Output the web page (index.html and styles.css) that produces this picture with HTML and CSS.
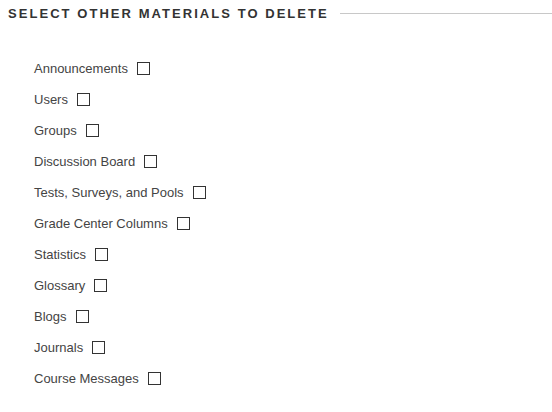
FILE: index.html
```html
<!DOCTYPE html>
<html>
<head>
<meta charset="utf-8">
<link rel="stylesheet" href="styles.css">
</head>
<body>
<div class="section">
  <div class="heading">
    <h2 class="title">SELECT OTHER MATERIALS TO DELETE</h2>
    <div class="rule"></div>
  </div>
  <ul class="list">
    <li class="row"><label class="label">Announcements</label><span class="box"></span></li>
    <li class="row"><label class="label">Users</label><span class="box"></span></li>
    <li class="row"><label class="label">Groups</label><span class="box"></span></li>
    <li class="row"><label class="label">Discussion Board</label><span class="box"></span></li>
    <li class="row"><label class="label">Tests, Surveys, and Pools</label><span class="box"></span></li>
    <li class="row"><label class="label">Grade Center Columns</label><span class="box"></span></li>
    <li class="row"><label class="label">Statistics</label><span class="box"></span></li>
    <li class="row"><label class="label">Glossary</label><span class="box"></span></li>
    <li class="row"><label class="label">Blogs</label><span class="box"></span></li>
    <li class="row"><label class="label">Journals</label><span class="box"></span></li>
    <li class="row"><label class="label">Course Messages</label><span class="box"></span></li>
  </ul>
</div>
</body>
</html>
```
FILE: styles.css
```css
html, body {
  margin: 0;
  padding: 0;
  background: #fff;
}
body {
  font-family: "Liberation Sans", Arial, sans-serif;
  color: #444;
}
.section {
  padding: 5px 0 0 8px;
}
.heading {
  display: flex;
  align-items: center;
  gap: 11px;
  height: 16px;
}
.title {
  margin: 0;
  font-size: 13px;
  font-weight: bold;
  letter-spacing: 2.05px;
  color: #333;
  white-space: nowrap;
}
.rule {
  flex: 1;
  height: 1px;
  background: #c8c8c8;
}
.list {
  list-style: none;
  margin: 0;
  padding: 32px 0 0 26px;
}
.row {
  display: flex;
  align-items: center;
  height: 31px;
  font-size: 13px;
  color: #444;
}
.label {
  margin-right: 9px;
}
.box {
  width: 11px;
  height: 11px;
  border: 1px solid #333;
  background: #fff;
}
```
